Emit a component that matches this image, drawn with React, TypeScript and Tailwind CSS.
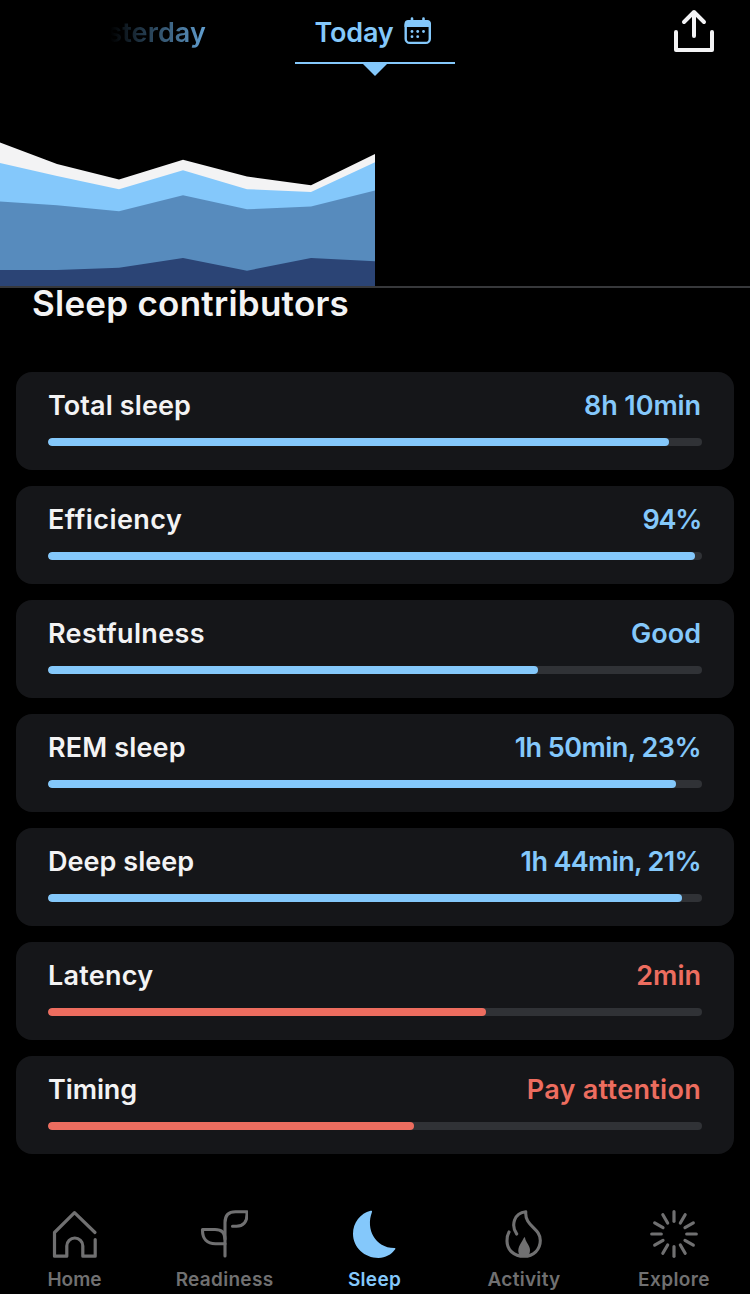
import React from "react";

type Tone = "good" | "alert";

interface Contributor {
  label: string;
  value: string;
  fill: number;
  tone: Tone;
  labelClass: string;
  valueClass: string;
}

const contributors: Contributor[] = [
  { label: "Total sleep", value: "8h 10min", fill: 621, tone: "good", labelClass: "tracking-[0.1px]", valueClass: "tracking-[-0.1px]" },
  { label: "Efficiency", value: "94%", fill: 647, tone: "good", labelClass: "tracking-[0.45px]", valueClass: "tracking-[-1.3px]" },
  { label: "Restfulness", value: "Good", fill: 490, tone: "good", labelClass: "tracking-[0.35px]", valueClass: "tracking-[0px]" },
  { label: "REM sleep", value: "1h 50min, 23%", fill: 628, tone: "good", labelClass: "tracking-[0.15px]", valueClass: "tracking-[-0.55px]" },
  { label: "Deep sleep", value: "1h 44min, 21%", fill: 634, tone: "good", labelClass: "tracking-[0.05px]", valueClass: "tracking-[-0.65px]" },
  { label: "Latency", value: "2min", fill: 438, tone: "alert", labelClass: "tracking-[0.25px]", valueClass: "tracking-[0px]" },
  { label: "Timing", value: "Pay attention", fill: 366, tone: "alert", labelClass: "tracking-[-0.1px]", valueClass: "tracking-[0.3px]" },
];

function CalendarIcon() {
  return (
    <svg width="28" height="28" viewBox="0 0 28 28" fill="none" className="shrink-0">
      <rect x="1.700" y="4.300" width="24.100" height="21.600" rx="4" stroke="#84c8fb" strokeWidth="2.400" />
      <path d="M.5 10V7a4 4 0 0 1 4-4H23a4 4 0 0 1 4 4v3z" fill="#84c8fb" />
      <path d="M8 1.500v3M19.500 1.500v3" stroke="#84c8fb" strokeWidth="2.600" strokeLinecap="round" />
      <g fill="#84c8fb">
        <circle cx="8" cy="14.500" r="1.400" />
        <circle cx="13.700" cy="14.500" r="1.400" />
        <circle cx="19.500" cy="14.500" r="1.400" />
        <circle cx="8" cy="19.700" r="1.400" />
        <circle cx="13.700" cy="19.700" r="1.400" />
      </g>
    </svg>
  );
}

function ShareIcon() {
  return (
    <svg width="42" height="44" viewBox="0 0 42 44" fill="none" stroke="#f3f3f5" strokeWidth="4" strokeLinecap="round" strokeLinejoin="round">
      <path d="M2 23v18h36V23" />
      <path d="M20 27V3M10 13 20 3l10 10" />
    </svg>
  );
}

function SleepChart() {
  return (
    <svg width="375" height="144" viewBox="0 142 375 144" className="block">
      <path d="M0 142.500 57 164 119 179.500 183 159.700 247 176.500 311 185.300 375 154V286H0z" fill="#f3f3f4" />
      <path d="M0 163 57 176 119 189.200 183 170.300 247 189.200 311 192 375 162.300V286H0z" fill="#84c8fb" />
      <path d="M0 201.600 57 205.300 119 211.300 183 195.200 247 209.300 311 206.400 375 190.600V286H0z" fill="#578bbd" />
      <path d="M0 270H57L119 267.700 183 258 247 270.700 311 258 375 261.200V286H0z" fill="#2b4475" />
    </svg>
  );
}

function HomeIcon() {
  return (
    <svg width="48" height="48" viewBox="0 0 48 48" fill="none" stroke="currentColor" strokeWidth="3.200" strokeLinecap="round" strokeLinejoin="round">
      <path d="M45 22.500 24.500 2.700 4.500 22.500v23.700H16.800V36a8 8 0 0 1 16 0V46.200h12.400V29.500" />
    </svg>
  );
}

function ReadinessIcon() {
  return (
    <svg width="48" height="48" viewBox="0 0 48 48" fill="none" stroke="currentColor" strokeWidth="3.100" strokeLinecap="round" strokeLinejoin="round">
      <path d="M25 46V12.500Q25 1.700 35.500 1.700H47V4.500C47 12 43 16.200 36.500 16.200H32.500" />
      <path d="M25 33.700H15.500C7 33.700 2.500 28.500 2.500 20.500V19.500H15C21.500 19.500 25 23 25 29" />
    </svg>
  );
}

function MoonIcon() {
  return (
    <svg width="48" height="48" viewBox="0 0 48 48" fill="currentColor">
      <path d="M20.500 .8C22 .5 22.300 1 21.900 2.200C15.500 19 25 37.800 44.300 38C45.500 38 45.700 38.600 45 39.600C41.300 44.700 35.500 48 28.500 48C14.500 48 3 37.500 3 23.800C3 12.700 10.500 3.300 20.500 .8Z" />
    </svg>
  );
}

function FlameIcon() {
  return (
    <svg width="48" height="48" viewBox="0 0 48 48" fill="none">
      <path d="M16.700 24C11 16 13.500 3 25.800 1.800C24.500 16.500 40.300 17.500 40.300 30.500C40.300 39.500 33.500 46.300 24 46.300C14 46.300 7 40 7 31C7 27.500 7.500 24.500 9 22" stroke="currentColor" strokeWidth="3.100" strokeLinecap="round" strokeLinejoin="round" />
      <path d="M25 27.500C25.500 32.500 30 35 30 40C30 43 29 45 28 46.300H20C15.500 38.500 21 34 23.500 28.500C24 27.300 24.800 27 25 27.500Z" fill="currentColor" />
    </svg>
  );
}

function ExploreIcon() {
  return (
    <svg width="48" height="48" viewBox="0 0 48 48" stroke="currentColor" strokeWidth="3.200" strokeLinecap="round">
      {[0, 30, 60, 90, 120, 150, 180, 210, 240, 270, 300, 330].map((a) => (
        <path key={a} d="M24 1.700V11.300" transform={`rotate(${a} 24 24)`} />
      ))}
    </svg>
  );
}

const tabs = [
  { label: "Home", icon: <HomeIcon />, active: false, labelClass: "pl-px tracking-[0px]" },
  { label: "Readiness", icon: <ReadinessIcon />, active: false, labelClass: "pl-px tracking-[0.3px]" },
  { label: "Sleep", icon: <MoonIcon />, active: true, labelClass: "pl-px tracking-[0.3px]" },
  { label: "Activity", icon: <FlameIcon />, active: false, labelClass: "tracking-[0.3px]" },
  { label: "Explore", icon: <ExploreIcon />, active: false, labelClass: "tracking-[0.4px]" },
];

export default function App() {
  return (
    <div className="flex h-[1294px] w-[750px] flex-col overflow-hidden bg-black font-['Inter',sans-serif] text-[#f3f3f4]">
      <header className="grid h-[142px] shrink-0 grid-cols-[295px_160px_295px]">
        <div className="flex h-[66px] items-center justify-end pr-[89px]">
          <span className="bg-linear-to-r from-transparent from-27% to-[#62a0d2] bg-clip-text text-[27px] font-semibold tracking-[0.1px] text-transparent">Yesterday</span>
        </div>
        <div className="flex flex-col items-center">
          <div className="flex h-[62px] w-full items-center justify-center gap-[11px] pr-[3px] text-[#84c8fb]">
            <span className="pt-1 text-[27px] font-semibold tracking-[-0.200px]">Today</span>
            <CalendarIcon />
          </div>
          <div className="h-[2px] w-full bg-[#84c8fb]" />
          <svg width="24" height="12" viewBox="0 0 24 12"><path d="M0 0h24L12 12z" fill="#84c8fb" /></svg>
        </div>
        <div className="flex justify-end pt-[9px] pr-[34px]">
          <ShareIcon />
        </div>
      </header>

      <section className="h-[146px] shrink-0 border-b-2 border-[#37383b]">
        <SleepChart />
      </section>

      <h1 className="h-[84px] shrink-0 pl-8 text-[35px] leading-[30px] font-semibold tracking-[0.25px] whitespace-nowrap">Sleep contributors</h1>

      <main className="flex flex-col gap-4 px-4">
        {contributors.map((c) => (
          <article key={c.label} className="flex h-[98px] flex-col rounded-2xl bg-[#151619] px-8 pt-[14px]">
            <div className="flex h-10 items-center justify-between pr-px text-[27px] font-semibold whitespace-nowrap">
              <span className={c.labelClass}>{c.label}</span>
              <span className={`${c.valueClass} ${c.tone === "good" ? "text-[#84c8fb]" : "text-[#ed6d5f]"}`}>{c.value}</span>
            </div>
            <div className="mt-3 h-2 overflow-hidden rounded-full bg-[#303236]">
              <div className={`h-full rounded-full ${c.tone === "good" ? "bg-[#84c8fb]" : "bg-[#ed6d5f]"}`} style={{ width: c.fill }} />
            </div>
          </article>
        ))}
      </main>

      <nav className="mt-14 mr-[2px] -ml-px grid grid-cols-[150px_150px_150px_150px_150px]">
        {tabs.map((t) => (
          <div key={t.label} className={`flex flex-col items-center ${t.active ? "text-[#84c8fb]" : "text-[#707071]"}`}>
            {t.icon}
            <span className={`mt-[10px] text-[19px] leading-6 font-semibold ${t.labelClass}`}>{t.label}</span>
          </div>
        ))}
      </nav>
    </div>
  );
}
